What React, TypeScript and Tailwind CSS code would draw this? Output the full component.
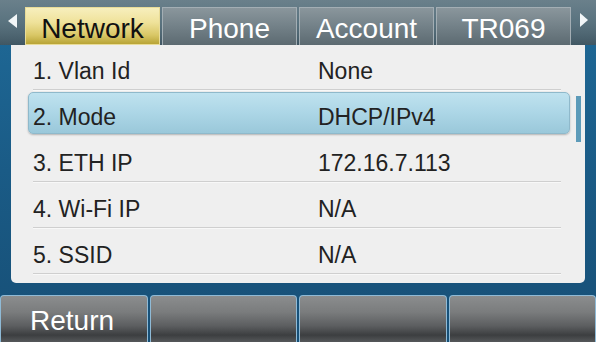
import React from "react";

const rows = [
  { k: "1. Vlan Id", v: "None" },
  { k: "2. Mode", v: "DHCP/IPv4" },
  { k: "3. ETH IP", v: "172.16.7.113" },
  { k: "4. Wi-Fi IP", v: "N/A" },
  { k: "5. SSID", v: "N/A" },
];

const tabs = ["Network", "Phone", "Account", "TR069"];

export default function App() {
  return (
    <div
      className="w-[596px] h-[342px] flex flex-col overflow-hidden bg-[linear-gradient(180deg,#1f6a98_0%,#1a5b86_50%,#174f76_100%)]"
      style={{ fontFamily: '"Liberation Sans", Arial, sans-serif' }}
    >
      {/* Tab bar */}
      <div className="h-[45px] shrink-0 flex items-end bg-[linear-gradient(180deg,#6a808b_0%,#5b7480_45%,#42596552_100%),linear-gradient(180deg,#5d7480,#3f5561)]">
        <div className="w-[25px] h-full flex items-center justify-center pb-[3px]">
          <svg width="9" height="14" viewBox="0 0 9 14">
            <polygon points="9,0 9,14 0,7" fill="#f2f6f8" />
          </svg>
        </div>
        <div className="flex gap-[2px] h-[38px]">
          {tabs.map((t, i) =>
            i === 0 ? (
              <div
                key={t}
                className="w-[135px] h-full flex items-center justify-center pt-[5px] text-[28px] text-[#111] border border-[#e9dc98] bg-[linear-gradient(180deg,#f7efbd_0%,#efe29a_40%,#d9c766_75%,#b8a436_100%)]"
              >
                {t}
              </div>
            ) : (
              <div
                key={t}
                className="w-[135px] h-full flex items-center justify-center pt-[5px] text-[28px] text-white border border-b-0 border-[#a3aeb4] bg-[linear-gradient(180deg,#8a969c_0%,#75838a_45%,#5c6a71_100%)]"
              >
                {t}
              </div>
            )
          )}
        </div>
        <div className="flex-1 h-full flex items-center justify-center pb-[6px]">
          <svg width="8" height="14" viewBox="0 0 8 14">
            <polygon points="0,0 8,7 0,14" fill="#f2f6f8" />
          </svg>
        </div>
      </div>

      {/* Content */}
      <div className="h-[238px] shrink-0 px-[11px]">
        <div className="relative h-full bg-[#efefef] rounded-b-[5px] flex flex-col">
          {rows.map((r, i) => (
            <div key={r.k} className="relative h-[46px] shrink-0">
              {i === 1 ? (
                <div className="absolute left-[17px] right-[15px] top-[1px] bottom-[3px] rounded-[5px] border border-[#8fb9cb] bg-[linear-gradient(180deg,#bfe2ef_0%,#acd6e6_50%,#9ac8da_100%)] shadow-[0_1px_2px_rgba(0,0,0,0.25)]" />
              ) : (
                <div className="absolute left-[22px] right-[24px] bottom-0 h-[2px] bg-[#cfcfcf] border-b border-[#f8f8f8]" />
              )}
              <div className="relative h-full flex items-center pt-[7px] text-[23px] text-[#222]">
                <div className="w-[307px] pl-[22px]">{r.k}</div>
                <div>{r.v}</div>
              </div>
            </div>
          ))}
          <div className="absolute left-[565px] top-[51px] w-[5px] h-[46px] bg-[#5d9bb9]" />
        </div>
      </div>

      {/* Spacer */}
      <div className="flex-1" />

      {/* Soft keys */}
      <div className="h-[47px] shrink-0 flex gap-[2px]">
        {["Return", "", "", ""].map((b, i) => (
          <div
            key={i}
            className="flex-1 rounded-t-[4px] border border-b-0 border-[#8fbad6] flex items-center pl-[29px] pt-[4px] text-[28px] text-white bg-[linear-gradient(180deg,#8b8d8e_0%,#7a7c7d_35%,#5c5e60_65%,#3c3e40_85%,#55585a_100%)]"
          >
            {b}
          </div>
        ))}
      </div>
    </div>
  );
}
